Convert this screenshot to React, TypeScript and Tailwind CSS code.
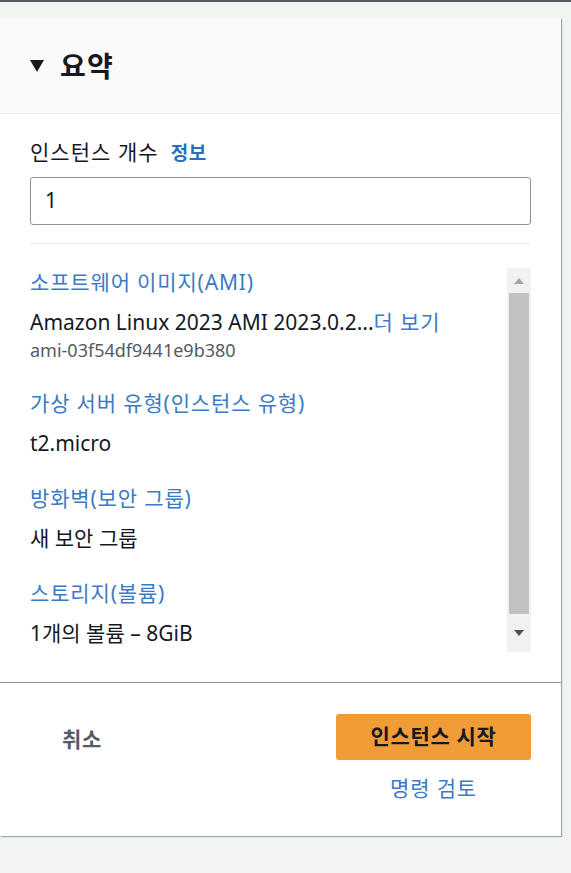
const FONT = { fontFamily: '"Noto Sans", "Noto Sans CJK KR", sans-serif' };

function Field({ label, value, sub, more }: { label: string; value: string; sub?: string; more?: boolean }) {
  return (
    <div className="flex flex-col">
      <div className="text-[21px] leading-[24px] tracking-[0.04em] text-[#3b7bc4]">{label}</div>
      <div className="mt-[16px] whitespace-nowrap text-[21px] leading-[24px] text-[#16191f]">
        {value}
        {more && <span className="tracking-[0.04em] text-[#3b7bc4]">더 보기</span>}
      </div>
      {sub && <div className="mt-[6px] text-[18px] leading-[20px] text-[#545b64]">{sub}</div>}
    </div>
  );
}

export default function App() {
  return (
    <div className="min-h-[873px] bg-[#f2f3f3] border-t-2 border-[#545b64] pt-[16px]" style={FONT}>
      <div className="w-[561px] bg-white shadow-[1px_1px_1px_0_rgba(0,28,36,0.35)]">
        {/* header */}
        <div className="flex h-[96px] items-center gap-[16px] border-b border-[#eaeded] bg-[#fafafa] pl-[30px]">
          <svg width="14" height="12" viewBox="0 0 14 12">
            <path d="M0 0H14L7 12Z" fill="#16191f" />
          </svg>
          <span className="text-[28px] font-bold leading-none tracking-[0.04em] text-[#16191f]">요약</span>
        </div>

        {/* body */}
        <div className="px-[30px] pt-[26px]">
          <div className="flex items-baseline gap-[12px] text-[#16191f]">
            <span className="text-[21px] leading-[24px] tracking-[0.05em]">인스턴스 개수</span>
            <span className="text-[19px] font-bold leading-[24px] tracking-[0.03em] text-[#2a6fbd]">정보</span>
          </div>
          <div className="mt-[12px] flex h-[48px] items-center rounded-[3px] border border-[#879596] px-[14px] text-[21px] text-[#16191f]">
            1
          </div>
          <div className="mt-[18px] h-px bg-[#eaeded]" />

          <div className="mt-[24px] flex h-[384px] gap-[8px]">
            <div className="flex flex-1 flex-col gap-[31px] overflow-hidden pt-[2px]">
              <Field label="소프트웨어 이미지(AMI)" value="Amazon Linux 2023 AMI 2023.0.2..." sub="ami-03f54df9441e9b380" more />
              <Field label="가상 서버 유형(인스턴스 유형)" value="t2.micro" />
              <Field label="방화벽(보안 그룹)" value="새 보안 그룹" />
              <Field label="스토리지(볼륨)" value="1개의 볼륨 – 8GiB" />
            </div>
            {/* scrollbar */}
            <div className="flex w-[24px] flex-col items-center bg-[#f1f1f1] px-[2px]">
              <div className="flex h-[25px] items-center justify-center">
                <svg width="10" height="6" viewBox="0 0 10 6">
                  <path d="M0 6H10L5 0Z" fill="#a3a3a3" />
                </svg>
              </div>
              <div className="w-full flex-1 bg-[#c1c1c1]" />
              <div className="flex h-[38px] items-center justify-center">
                <svg width="10" height="6" viewBox="0 0 10 6">
                  <path d="M0 0H10L5 6Z" fill="#505050" />
                </svg>
              </div>
            </div>
          </div>
        </div>

        <div className="mt-[30px] h-px bg-[#879596]" />

        {/* footer */}
        <div className="flex items-start justify-between px-[30px] pb-[31px] pt-[31px]">
          <button className="mt-[10px] px-[32px] text-[21px] font-bold tracking-[0.03em] text-[#545b64]">취소</button>
          <div className="flex flex-col items-center gap-[13px]">
            <button className="h-[46px] w-[195px] rounded-[3px] bg-[#f09d38] text-[21px] font-bold tracking-[0.03em] text-[#16191f]">
              인스턴스 시작
            </button>
            <span className="text-[21px] tracking-[0.04em] text-[#3b7bc4]">명령 검토</span>
          </div>
        </div>
      </div>
    </div>
  );
}
